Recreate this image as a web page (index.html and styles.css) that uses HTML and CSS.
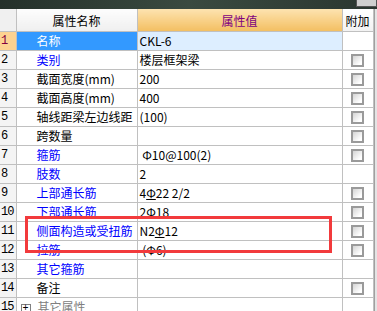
FILE: index.html
```html
<!DOCTYPE html>
<html lang="zh-CN">
<head>
  <meta charset="UTF-8">
  <title>属性编辑</title>
  <link rel="stylesheet" href="styles.css">
</head>
<body>
  <!-- Window title strip -->
  <div class="top-strip">
    <div class="win-btn"></div>
  </div>

  <div class="grid-wrap">
    <table class="prop-grid">
      <colgroup>
        <col class="c-num">
        <col class="c-name">
        <col class="c-val">
        <col class="c-add">
      </colgroup>
      <thead>
        <tr>
          <th class="h-num"></th>
          <th class="h-name">属性名称</th>
          <th class="h-val">属性值</th>
          <th class="h-add">附加</th>
        </tr>
      </thead>
      <tbody>
        <tr class="selected">
          <td class="num">1</td>
          <td class="name">名称</td>
          <td class="val">CKL-6</td>
          <td class="add"></td>
        </tr>
        <tr>
          <td class="num">2</td>
          <td class="name link">类别</td>
          <td class="val">楼层框架梁</td>
          <td class="add"><span class="chk"></span></td>
        </tr>
        <tr>
          <td class="num">3</td>
          <td class="name">截面宽度(mm)</td>
          <td class="val">200</td>
          <td class="add"><span class="chk"></span></td>
        </tr>
        <tr>
          <td class="num">4</td>
          <td class="name">截面高度(mm)</td>
          <td class="val">400</td>
          <td class="add"><span class="chk"></span></td>
        </tr>
        <tr>
          <td class="num">5</td>
          <td class="name">轴线距梁左边线距</td>
          <td class="val">(100)</td>
          <td class="add"><span class="chk"></span></td>
        </tr>
        <tr>
          <td class="num">6</td>
          <td class="name">跨数量</td>
          <td class="val"></td>
          <td class="add"><span class="chk"></span></td>
        </tr>
        <tr>
          <td class="num">7</td>
          <td class="name link">箍筋</td>
          <td class="val">&nbsp;Φ10@100(2)</td>
          <td class="add"><span class="chk"></span></td>
        </tr>
        <tr>
          <td class="num">8</td>
          <td class="name link">肢数</td>
          <td class="val">2</td>
          <td class="add"></td>
        </tr>
        <tr>
          <td class="num">9</td>
          <td class="name link">上部通长筋</td>
          <td class="val">4<span class="bar">Φ</span>22 2/2</td>
          <td class="add"><span class="chk"></span></td>
        </tr>
        <tr>
          <td class="num">10</td>
          <td class="name link">下部通长筋</td>
          <td class="val">2<span class="bar">Φ</span>18</td>
          <td class="add"><span class="chk"></span></td>
        </tr>
        <tr>
          <td class="num">11</td>
          <td class="name link">侧面构造或受扭筋</td>
          <td class="val">N2<span class="bar">Φ</span>12</td>
          <td class="add"><span class="chk"></span></td>
        </tr>
        <tr>
          <td class="num">12</td>
          <td class="name link">拉筋</td>
          <td class="val">&nbsp;(Φ6)</td>
          <td class="add"><span class="chk"></span></td>
        </tr>
        <tr>
          <td class="num">13</td>
          <td class="name link">其它箍筋</td>
          <td class="val"></td>
          <td class="add"></td>
        </tr>
        <tr>
          <td class="num">14</td>
          <td class="name">备注</td>
          <td class="val"></td>
          <td class="add"><span class="chk"></span></td>
        </tr>
        <tr class="group">
          <td class="num">15</td>
          <td class="name"><span class="plus">+</span>其它属性</td>
          <td class="val"></td>
          <td class="add"></td>
        </tr>
      </tbody>
    </table>
    <div class="side-bar"></div>

    <!-- red annotation box -->
    <div class="mark"></div>
  </div>
</body>
</html>
```

FILE: styles.css
```css
body {
  margin: 0;
  padding: 0;
  width: 377px;
  height: 311px;
  overflow: hidden;
  background: #fff;
  font-family: "Noto Sans CJK SC", "Liberation Sans", sans-serif;
  font-size: 12px;
  color: #000;
}
.top-strip {
  height: 9px;
  background: linear-gradient(to right, #24302a, #3a4a40 50%, #2a3630);
  position: relative;
}
.win-btn {
  position: absolute;
  right: 0;
  top: 0;
  width: 19px;
  height: 6px;
  background: #cfcfcf;
  border: 1px solid #555;
  border-top: none;
}
.grid-wrap {
  position: relative;
  display: flex;
}
.prop-grid {
  border-collapse: collapse;
  table-layout: fixed;
  width: 373px;
}
.c-num { width: 16px; }
.c-name { width: 121px; }
.c-val { width: 205px; }
.c-add { width: 31px; }
.prop-grid th,
.prop-grid td {
  padding: 0;
  border-right: 1px solid #c0c0c0;
  border-bottom: 1px solid #c0c0c0;
  white-space: nowrap;
  overflow: hidden;
  font-weight: normal;
}
.prop-grid th {
  height: 22px;
  font-size: 12px;
  text-align: center;
  background: linear-gradient(#fdfdfd, #efefef);
}
.prop-grid th.h-num {
  background: #f0f0f0;
}
.prop-grid th.h-val {
  background: linear-gradient(#fde3b0, #f3bf62);
  color: #800080;
}
.prop-grid th.h-add {
  background: linear-gradient(#ffffff, #f2f2f2);
}
.prop-grid td {
  height: 18px;
  line-height: 18px;
}
.num {
  background: #f4f4f4;
  padding-left: 1px !important;
  font-family: "Liberation Mono", monospace;
  font-size: 12px;
  letter-spacing: -1px;
}
.name {
  padding-left: 20px !important;
}
.name.link {
  color: #0000ff;
}
.val {
  padding-left: 2px !important;
}
.add {
  text-align: center;
}
.bar {
  text-decoration: underline;
}
.chk {
  display: inline-block;
  width: 9px;
  height: 9px;
  margin-top: 3px;
  vertical-align: top;
  border: 2px solid #9a9a9a;
  background: linear-gradient(135deg, #d4d4d4, #ffffff 80%);
}
.selected .num {
  background: #fdd291;
  color: #800040;
}
.selected .name {
  background: #3399ff;
  color: #fff;
}
.selected .val {
  background: #ddeeff;
}
.group .name {
  color: #808080;
  padding-left: 4px !important;
}
.plus {
  display: inline-block;
  width: 8px;
  height: 8px;
  line-height: 8px;
  margin-right: 7px;
  border: 1px solid #808080;
  color: #000;
  text-align: center;
  font-size: 10px;
  font-family: "Liberation Mono", monospace;
  vertical-align: middle;
}
.side-bar {
  width: 4px;
  background: #e4e4e4;
  border-left: 1px solid #a0a0a0;
}
.mark {
  position: absolute;
  left: 25px;
  top: 207px;
  width: 301px;
  height: 31px;
  border: 3px solid #f23a3c;
}
```
